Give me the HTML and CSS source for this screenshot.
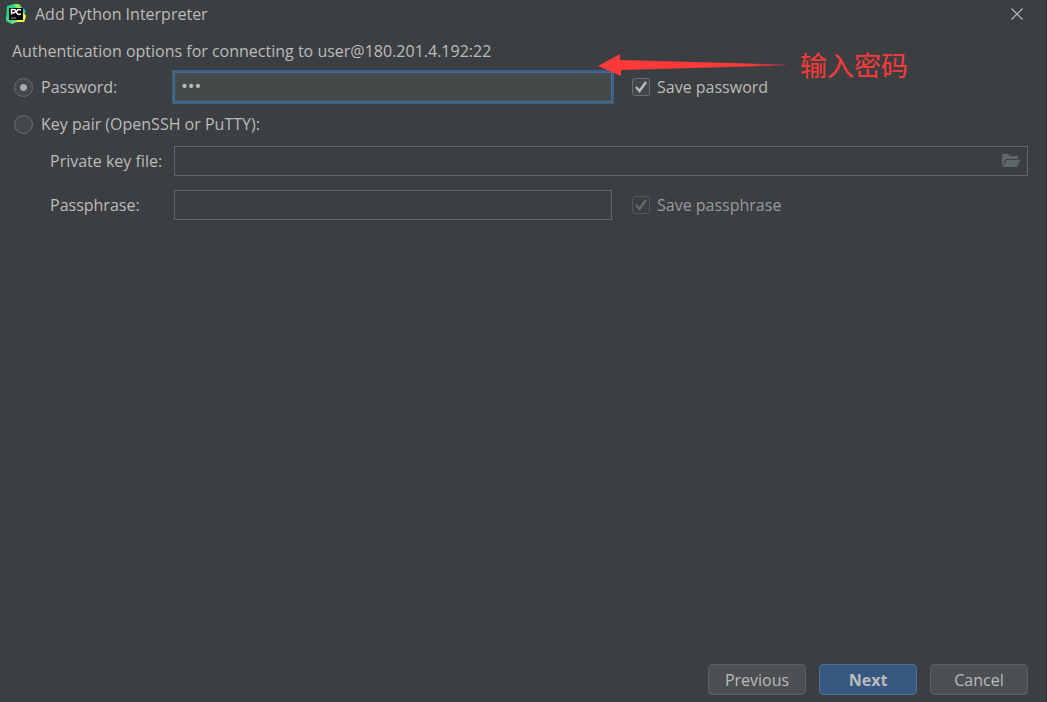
FILE: index.html
```html
<!DOCTYPE html>
<html lang="en">
<head>
    <meta charset="UTF-8">
    <meta name="viewport" content="width=device-width, initial-scale=1.0">
    <link rel="stylesheet" href="styles.css">
    <title>Add Python Interpreter</title>
</head>
<body>
    <header class="titlebar">
        <svg class="logo" viewBox="0 0 20 20" width="20" height="20" aria-hidden="true">
            <defs>
                <linearGradient id="logo-green" x1="0" y1="0" x2="1" y2="1">
                    <stop offset="0" stop-color="#21d789"/>
                    <stop offset="0.5" stop-color="#3ddc91"/>
                    <stop offset="1" stop-color="#fcf84a"/>
                </linearGradient>
            </defs>
            <path d="M13 2 L17 4 L20 7 L18 10 L19 17 L12 10 Z" fill="#12c8e8"/>
            <path d="M1 2 L8 0 L14 1 L15 6 L3 18 L0 15 Z" fill="#21d789"/>
            <path d="M8 0 L13 0 L16 4 L10 4 Z" fill="#8ee65c"/>
            <path d="M1 11 L17 7 L20 12 L18 18 L11 18 L6 20 L0 17 Z" fill="url(#logo-green)"/>
            <path d="M17 8 L20 12 L18 18 L10 18 Z" fill="#f4f33f"/>
            <rect x="3" y="4" width="14" height="12" fill="#000"/>
            <path d="M5.5 10.5 V5.5 H8 A1.5 1.5 0 0 1 8 8.7 H5.5 M15 6.3 A2.5 2.5 0 1 0 15 9.6" fill="none" stroke="#fff" stroke-width="1.5"/>
            <path d="M5 14 H10" stroke="#aaa" stroke-width="1"/>
        </svg>
        <h1>Add Python Interpreter</h1>
        <button class="close-button" type="button" aria-label="Close">
            <svg viewBox="0 0 12 12" width="12" height="12"><path d="M0.5 0.5 L11.5 11.5 M11.5 0.5 L0.5 11.5"/></svg>
        </button>
    </header>

    <form class="dialog">
        <p class="intro">Authentication options for connecting to user@180.201.4.192:22</p>

        <div class="fields">
            <label class="option"><input type="radio" name="auth" checked>Password:</label>
            <input class="field focused" type="password" value="123" aria-label="Password">
            <label class="option save"><input type="checkbox" checked>Save password</label>

            <label class="option wide"><input type="radio" name="auth">Key pair (OpenSSH or PuTTY):</label>

            <label class="sub" for="keyfile">Private key file:</label>
            <div class="field browse">
                <input type="text" id="keyfile">
                <button type="button" aria-label="Browse">
                    <svg viewBox="0 0 20 16" width="20" height="16"><path d="M1 1 H7 L9 3 H17 V6 H5 L1 13 Z"/><path d="M5.5 7 H19.5 L16 14 H1.5 Z"/></svg>
                </button>
            </div>

            <label class="sub" for="passphrase">Passphrase:</label>
            <input class="field" type="password" id="passphrase">
            <label class="option save disabled"><input type="checkbox" checked disabled>Save passphrase</label>
        </div>

        <footer class="buttons">
            <button type="button">Previous</button>
            <button type="submit" class="primary">Next</button>
            <button type="button">Cancel</button>
        </footer>
    </form>

    <div class="note">
        <svg viewBox="0 0 190 24" width="190" height="24" aria-hidden="true">
            <defs>
                <linearGradient id="tail" x1="0" y1="0" x2="1" y2="0">
                    <stop offset="0.8" stop-color="#ff3838"/>
                    <stop offset="1" stop-color="#ff3838" stop-opacity="0.3"/>
                </linearGradient>
            </defs>
            <path d="M0 13 L22 1 V7 L188 11.5 V12.5 L23 17 V23 Z" fill="url(#tail)"/>
        </svg>
        <span lang="zh">输入密码</span>
    </div>
</body>
</html>
```
FILE: styles.css
```css
* {
    box-sizing: border-box;
}

body {
    display: flex;
    flex-direction: column;
    min-height: 100vh;
    margin: 0;
    border-right: 1px solid #2f3234;
    background-color: #3c3f41;
    color: #bbb;
    font-family: "Open Sans", "Noto Sans", "Noto Sans CJK SC", sans-serif;
    font-size: 16px;
    line-height: 22px;
}

input,
button {
    margin: 0;
    color: inherit;
    font: inherit;
}

.titlebar {
    display: flex;
    align-items: center;
    height: 28px;
    padding: 0 23px 0 6px;
}

h1 {
    flex: 1;
    margin: 0 0 0 9px;
    font-size: 16px;
    font-weight: normal;
}

.close-button {
    display: flex;
    padding: 0;
    border: 0;
    background: none;
}

.close-button path {
    fill: none;
    stroke: #bbb;
    stroke-width: 1.2;
}

.dialog {
    display: flex;
    flex: 1;
    flex-direction: column;
    padding: 12px 18px 7px 12px;
}

.intro {
    margin: 0;
}

.fields {
    display: grid;
    grid-template-columns: 142px 1fr 396px;
    grid-template-rows: 30px 16px 30px 30px;
    gap: 14px 20px;
    align-items: center;
    margin-top: 10px;
}

.option {
    display: flex;
    align-items: center;
    gap: 8px;
    padding-left: 2px;
    white-space: nowrap;
}

.wide {
    grid-column: 1 / -1;
}

.save {
    gap: 7px;
    padding-left: 0;
}

.sub {
    padding-left: 38px;
    white-space: nowrap;
}

.disabled {
    color: #999;
}

input[type="radio"],
input[type="checkbox"] {
    appearance: none;
    width: 19px;
    height: 19px;
    border: 1px solid #6b6b6b;
    background: #43494a center no-repeat;
}

input[type="radio"] {
    border-radius: 50%;
}

input[type="radio"]:checked {
    background-image: radial-gradient(circle, #aaa 3px, transparent 4px);
}

input[type="checkbox"] {
    width: 18px;
    height: 18px;
    border-radius: 3px;
    background-image: url("data:image/svg+xml,%3Csvg xmlns='http://www.w3.org/2000/svg' width='16' height='16'%3E%3Cpath d='M3 8 L6.5 12 L13 3' fill='none' stroke='%23bbb' stroke-width='2.4'/%3E%3C/svg%3E");
}

input[type="checkbox"]:disabled {
    border-color: #55585a;
    background-color: #3c3f41;
    background-image: url("data:image/svg+xml,%3Csvg xmlns='http://www.w3.org/2000/svg' width='16' height='16'%3E%3Cpath d='M3 8 L6.5 12 L13 3' fill='none' stroke='%23666' stroke-width='2.4'/%3E%3C/svg%3E");
}

.field {
    width: 100%;
    height: 30px;
    padding: 0 8px;
    border: 1px solid #646464;
    border-radius: 0;
    outline: 0;
    background-color: #3c3f41;
}

.focused {
    padding: 0 6px 3px;
    border-color: #466d94;
    background-color: #45494a;
    box-shadow: 0 0 0 2px #3d6185;
    font-size: 18px;
}

.browse {
    display: flex;
    grid-column: 2 / -1;
    align-items: center;
    padding: 0 6px 0 0;
}

.browse input {
    flex: 1;
    min-width: 0;
    padding: 0 8px;
    border: 0;
    outline: 0;
    background: none;
}

.browse button {
    display: flex;
    padding: 0;
    border: 0;
    background: none;
}

.browse path {
    fill: #5e6668;
}

.buttons {
    display: flex;
    justify-content: flex-end;
    gap: 13px;
    margin-top: auto;
}

.buttons button {
    width: 98px;
    height: 31px;
    padding: 0;
    border: 1px solid #5e6060;
    border-radius: 4px;
    background-color: #4c5052;
}

.buttons .primary {
    border-color: #4c708c;
    background-color: #365880;
    font-weight: bold;
}

/* callout lies over the form */
.note {
    position: absolute;
    top: 46px;
    left: 598px;
    display: flex;
    align-items: center;
    gap: 12px;
    color: #ff3838;
    font-family: "Noto Sans CJK SC", sans-serif;
    font-size: 27px;
    line-height: 38px;
    pointer-events: none;
}
```
